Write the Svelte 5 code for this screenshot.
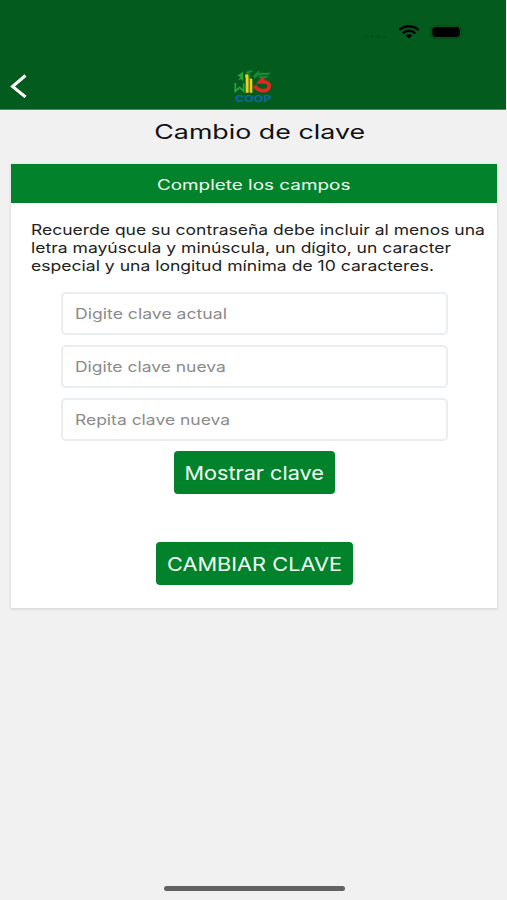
<script>
  const fields = [
    { label: 'Digite clave actual', scale: 1.215 },
    { label: 'Digite clave nueva', scale: 1.205 },
    { label: 'Repita clave nueva', scale: 1.205 }
  ];
  const notice = [
    { text: 'Recuerde que su contraseña debe incluir al menos una', scale: 1.207 },
    { text: 'letra mayúscula y minúscula, un dígito, un caracter', scale: 1.208 },
    { text: 'especial y una longitud mínima de 10 caracteres.', scale: 1.211 }
  ];
</script>

<main class="screen">
  <header>
    <div class="status">
      <span class="carrier">••••</span>
      <svg class="wifi" width="22" height="14" viewBox="0 0 22 14" fill="none" stroke="#000" stroke-width="2.5">
        <path d="M1.2 4.8Q11-2.5 20.8 4.8" />
        <path d="M4.8 8.2Q11 3.3 17.2 8.2" />
        <path d="M11 13.4L7.6 10.5Q11 8 14.4 10.5Z" fill="#000" stroke="none" />
      </svg>
      <svg class="battery" width="36" height="14" viewBox="0 0 36 14">
        <rect x=".6" y=".6" width="31" height="12.8" rx="4.5" fill="none" stroke="#034a18" stroke-width="1.1" />
        <rect x="2.3" y="2" width="27.5" height="10" rx="3.5" fill="#000" />
        <path d="M33 5Q35.4 7 33 9Z" fill="#034a18" />
      </svg>
    </div>
    <nav>
      <button class="back" aria-label="Volver">
        <svg width="18" height="24" viewBox="0 0 18 24" fill="none" stroke="#fff" stroke-width="3"><path d="M15.5 1.5L2.5 12.5L15.5 23" /></svg>
      </button>
      <svg class="logo" width="40" height="36" viewBox="40 24 120 108">
        <path d="M47 69V94L60 82L72 94V70" fill="none" stroke="#2fa43b" stroke-width="5" />
        <path d="M52 47L70 35V64L64 57L56 61L62 50Z" fill="#2fa43b" />
        <path d="M76 44L87 41V98H78V56Z" fill="#f1cf22" />
        <path d="M90 55L98 57V98H90Z" fill="#f1cf22" />
        <path d="M78 36L94 30L100 35L89 39L94 51L87 49L82 41Z" fill="#168b38" />
        <path d="M101 47L119 30L117 38H154L146 45H118L104 56ZM120 48H146L140 54H116Z" fill="#168b38" />
        <path d="M132 54L121 66H135C154 66 153 91 133 92C120 93 111 88 105 77" fill="none" stroke="#e52620" stroke-width="11" />
        <text x="46" y="126" textLength="109" lengthAdjust="spacingAndGlyphs">COOP</text>
      </svg>
    </nav>
  </header>

  <h1><span>Cambio de clave</span></h1>

  <section class="card">
    <h2><span>Complete los campos</span></h2>
    <div class="notice">
      {#each notice as line}
        <div><span style="transform: scaleX({line.scale})">{line.text}</span></div>
      {/each}
    </div>
    <div class="fields">
      {#each fields as field}
        <div class="field"><span style="transform: scaleX({field.scale})">{field.label}</span></div>
      {/each}
    </div>
    <button class="action show"><span>Mostrar clave</span></button>
    <button class="action change"><span>CAMBIAR CLAVE</span></button>
  </section>

  <div class="home"></div>
</main>

<style>
  :global(body) { margin: 0; background: #f1f1f1; }
  * { box-sizing: border-box; }
  .screen { display: flex; flex-direction: column; width: 507px; height: 900px; overflow: hidden; background: #f1f1f1; font-family: Inter, "Liberation Sans", sans-serif; color: #111; }
  span { display: inline-block; white-space: nowrap; }
  button { border: 0; padding: 0; font-family: inherit; }
  header { flex: none; width: 506px; height: 110px; background: #035b1d; border-bottom: 1px solid #4a8d5b; }
  .status { height: 64px; padding: 25px 40px 0 0; display: flex; justify-content: flex-end; }
  .carrier { color: #034c17; font-size: 9px; line-height: 22px; letter-spacing: 1px; margin-right: 10px; }
  .battery { margin-left: 10px; }
  nav { display: flex; height: 45px; padding: 4px 0 0 10px; }
  .back { width: 18px; height: 24px; margin-top: 6px; background: none; }
  .back svg { display: block; }
  .logo { margin-left: 205px; }
  .logo text { font: 700 28px Inter, sans-serif; fill: #0869b4; }
  h1 { margin: 0; height: 54px; flex: none; text-align: center; padding-left: 13px; font-size: 20px; line-height: 44px; font-weight: 400; }
  h1 span { transform: scaleX(1.34); }
  .card { flex: none; width: 486px; height: 444px; margin-left: 11px; background: #fff; box-shadow: 0 1px 2px 1px #dcdedd; display: flex; flex-direction: column; align-items: center; }
  h2 { margin: 0; align-self: stretch; height: 39px; flex: none; background: #02822b; color: #f2fff4; text-align: center; font-size: 14px; line-height: 41px; font-weight: 400; }
  h2 span { transform: scaleX(1.35); }
  .notice { align-self: stretch; flex: none; padding: 18px 0 0 19.5px; height: 89px; font-size: 14.5px; line-height: 17.8px; color: #222; }
  .notice div { height: 17.8px; }
  .notice span, .field span { transform-origin: left; }
  .fields { display: flex; flex-direction: column; gap: 10px; width: 387px; }
  .field { height: 43px; border: 2px solid #e9edef; border-radius: 5px; padding-left: 12px; font-size: 14.5px; line-height: 39px; color: #8b8b8b; }
  .action { height: 43px; flex: none; background: #02822b; color: #f2fff4; border-radius: 4px; font-size: 19px; line-height: 45px; display: flex; justify-content: center; }
  .show { width: 161px; margin-top: 9.5px; }
  .show span { transform: scaleX(1.14); }
  .change { width: 197px; margin-top: 48px; }
  .change span { transform: scaleX(1.145); }
  .home { flex: none; width: 181px; height: 5px; margin: 278px 0 0 164px; border-radius: 3px; background: #626262; }
</style>
